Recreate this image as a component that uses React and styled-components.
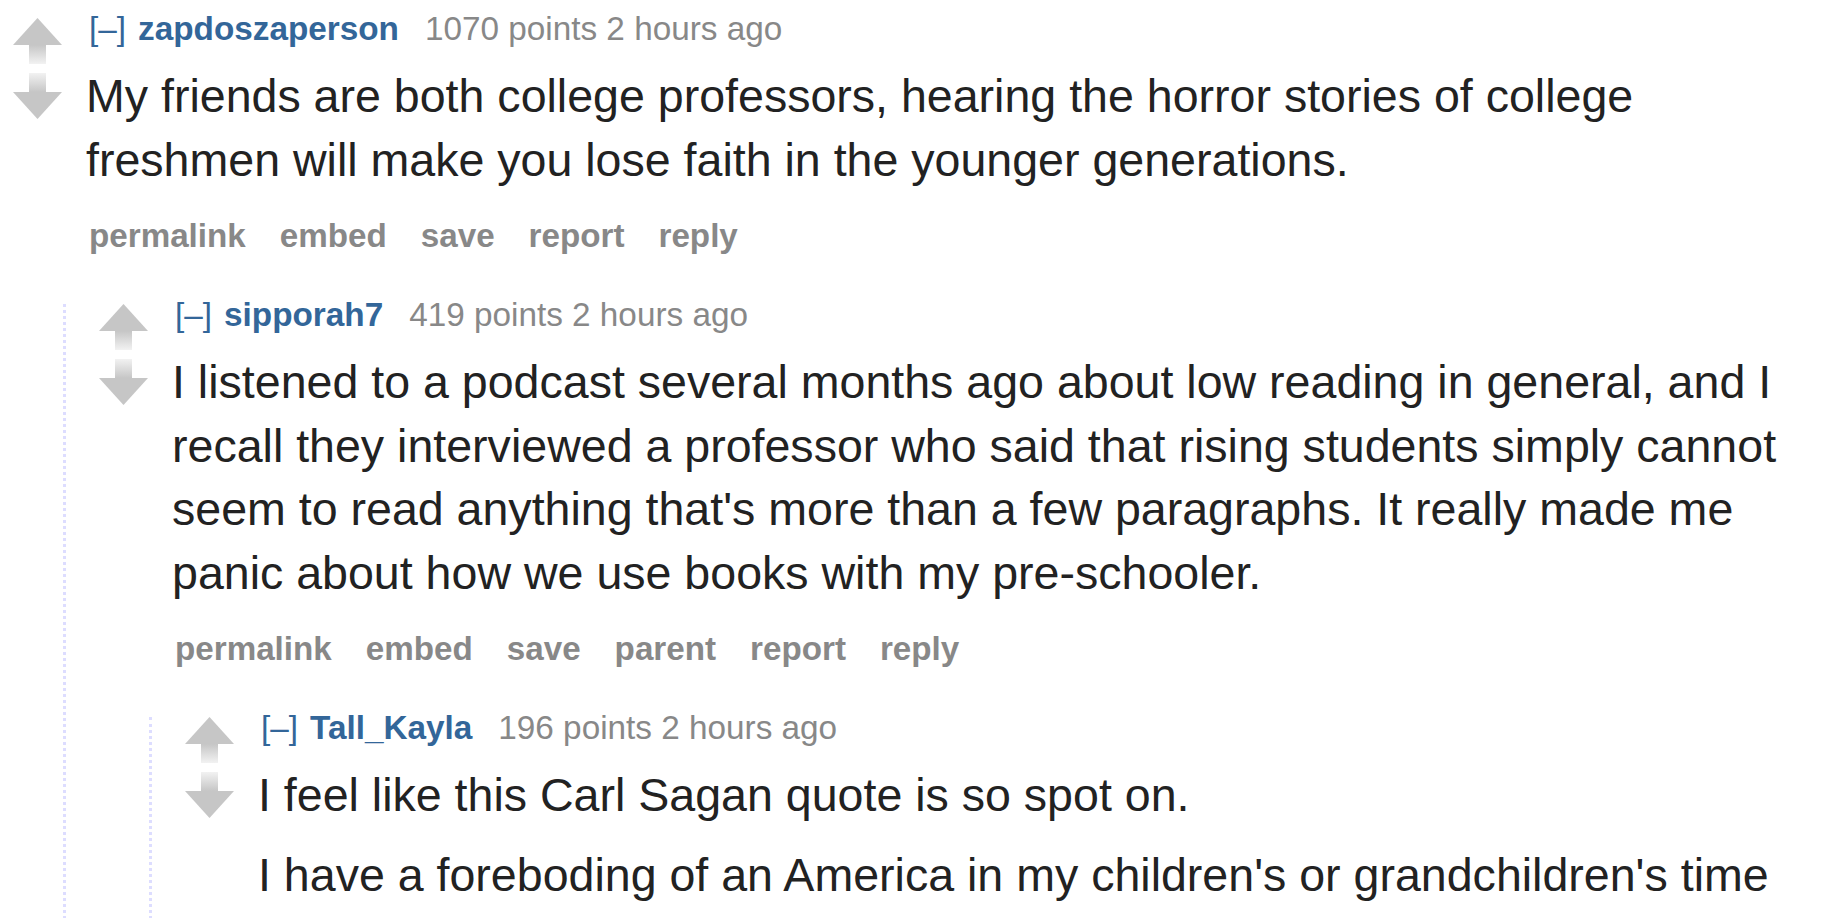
import React from "react";
import styled, { createGlobalStyle } from "styled-components";

const Global = createGlobalStyle`
  html, body { margin: 0; padding: 0; overflow: hidden; background: #fff; }
  body { font-family: "Liberation Sans", Arial, Helvetica, sans-serif; }
`;

const Page = styled.div`
  padding: 18px 32px 0 13px;
  box-sizing: border-box;
  width: 1832px;
`;

const CommentBox = styled.div`
  display: flex;
  flex-direction: column;
`;

const CommentRow = styled.div`
  display: flex;
  align-items: flex-start;
`;

const Midcol = styled.div`
  flex: 0 0 49px;
  width: 49px;
  display: flex;
  flex-direction: column;
  gap: 9px;
`;

const Entry = styled.div`
  flex: 1;
  min-width: 0;
  margin-left: 24px;
`;

const Tagline = styled.div`
  font-size: 33.3px;
  line-height: 22px;
  color: #888;
  padding-left: 3px;
  white-space: nowrap;
`;

const Expand = styled.span`
  color: #369;
  margin-right: 12px;
`;

const Author = styled.span`
  color: #369;
  font-weight: bold;
  margin-right: 26px;
`;

const Body = styled.div`
  margin-top: 25.3px;
  font-size: 46.55px;
  line-height: 63.4px;
  color: #222;
`;

const Para = styled.p`
  margin: 0;
  & + & { margin-top: 16.5px; }
`;

const Buttons = styled.ul`
  list-style: none;
  margin: 33px 0 0;
  padding: 0 0 0 3px;
  display: flex;
  gap: 34px;
  font-size: 33.2px;
  line-height: 22px;
  font-weight: bold;
  color: #888;
`;

const Child = styled.div`
  margin-top: 57px;
  margin-left: 50px;
  border-left: 3px dotted #ddf;
  padding-left: 33px;
`;

const ArrowSvg = styled.svg`
  display: block;
  width: 49px;
  height: 46px;
`;

function UpArrow() {
  return (
    <ArrowSvg viewBox="0 0 49 46">
      <defs>
        <linearGradient id="upg" x1="0" y1="0" x2="0" y2="1">
          <stop offset="0" stopColor="#c6c6c6" />
          <stop offset="1" stopColor="#f2f2f2" />
        </linearGradient>
      </defs>
      <polygon points="24.5,0 49,27 0,27" fill="#c6c6c6" />
      <rect x="16" y="27" width="17" height="19" fill="url(#upg)" />
    </ArrowSvg>
  );
}

function DownArrow() {
  return (
    <ArrowSvg viewBox="0 0 49 46">
      <defs>
        <linearGradient id="downg" x1="0" y1="0" x2="0" y2="1">
          <stop offset="0" stopColor="#f2f2f2" />
          <stop offset="1" stopColor="#c6c6c6" />
        </linearGradient>
      </defs>
      <rect x="16" y="0" width="17" height="19" fill="url(#downg)" />
      <polygon points="0,19 49,19 24.5,46" fill="#c6c6c6" />
    </ArrowSvg>
  );
}

function Comment({ author, points, time, paragraphs, buttons, children }) {
  return (
    <CommentBox>
      <CommentRow>
        <Midcol>
          <UpArrow />
          <DownArrow />
        </Midcol>
        <Entry>
          <Tagline>
            <Expand>[–]</Expand>
            <Author>{author}</Author>
            <span>{points} points {time}</span>
          </Tagline>
          <Body>
            {paragraphs.map((p, i) => (
              <Para key={i}>{p}</Para>
            ))}
          </Body>
          {buttons && (
            <Buttons>
              {buttons.map((b) => (
                <li key={b}>{b}</li>
              ))}
            </Buttons>
          )}
        </Entry>
      </CommentRow>
      {children && <Child>{children}</Child>}
    </CommentBox>
  );
}

export default function App() {
  return (
    <>
      <Global />
      <Page>
        <Comment
          author="zapdoszaperson"
          points="1070"
          time="2 hours ago"
          paragraphs={[
            "My friends are both college professors, hearing the horror stories of college freshmen will make you lose faith in the younger generations.",
          ]}
          buttons={["permalink", "embed", "save", "report", "reply"]}
        >
          <Comment
            author="sipporah7"
            points="419"
            time="2 hours ago"
            paragraphs={[
              "I listened to a podcast several months ago about low reading in general, and I recall they interviewed a professor who said that rising students simply cannot seem to read anything that's more than a few paragraphs. It really made me panic about how we use books with my pre-schooler.",
            ]}
            buttons={["permalink", "embed", "save", "parent", "report", "reply"]}
          >
            <Comment
              author="Tall_Kayla"
              points="196"
              time="2 hours ago"
              paragraphs={[
                "I feel like this Carl Sagan quote is so spot on.",
                "I have a foreboding of an America in my children's or grandchildren's time — when the United States is a service and information economy; when nearly all the manufacturing industries have slipped away to other countries.",
              ]}
              buttons={["permalink", "embed", "save", "parent", "report", "reply"]}
            />
          </Comment>
        </Comment>
      </Page>
    </>
  );
}
